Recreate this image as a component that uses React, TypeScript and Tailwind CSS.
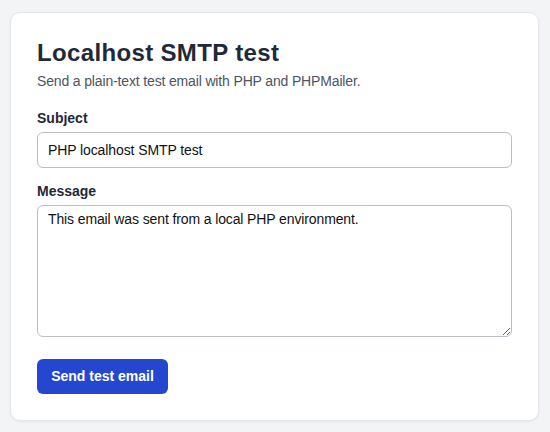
import React, { useState } from 'react';

const App: React.FC = () => {
  const [subject, setSubject] = useState('PHP localhost SMTP test');
  const [message, setMessage] = useState('This email was sent from a local PHP environment.');

  const handleSubmit = (e: React.FormEvent<HTMLFormElement>) => {
    e.preventDefault();
  };

  return (
    <div className="min-h-screen bg-[#f3f4f6] px-[10px] pt-[12px] font-['Liberation_Sans',Arial,sans-serif]">
      <div className="w-[529px] rounded-[10px] border border-[#e4e6e9] bg-white px-[26px] pt-[25px] pb-[26px] shadow-[0_1px_3px_rgba(0,0,0,0.06)]">
        <h1 className="text-[24px] font-bold leading-[29px] tracking-[0.35px] text-[#1f2937]">Localhost SMTP test</h1>
        <p className="mt-[4px] text-[14px] leading-5 tracking-[-0.15px] text-[#4b5563]">
          Send a plain-text test email with PHP and PHPMailer.
        </p>

        <form className="mt-[19px]" onSubmit={handleSubmit}>
          <div className="mb-[15px]">
            <label htmlFor="subject" className="mb-[5px] block text-[14px] font-bold leading-[17px] text-[#1f2937]">
              Subject
            </label>
            <input
              id="subject"
              name="subject"
              value={subject}
              onChange={(e) => setSubject(e.target.value)}
              className="block h-[36px] w-full rounded-[6px] border border-[#b9bdc4] bg-white px-[10px] text-[14px] tracking-[-0.1px] text-[#111111] outline-none"
            />
          </div>

          <div>
            <label htmlFor="message" className="mb-[5px] block text-[14px] font-bold leading-[17px] text-[#1f2937]">
              Message
            </label>
            <textarea
              id="message"
              name="message"
              value={message}
              onChange={(e) => setMessage(e.target.value)}
              className="block h-[132px] w-full rounded-[6px] border border-[#b9bdc4] bg-white px-[10px] py-[5px] text-[14px] leading-4 tracking-[-0.12px] text-[#111111] outline-none"
            />
          </div>

          <button
            type="submit"
            className="mt-[22px] h-[35px] w-[131px] rounded-[6px] bg-[#2547d0] text-[14px] font-bold text-white"
          >
            Send test email
          </button>
        </form>
      </div>
    </div>
  );
};

export default App;
